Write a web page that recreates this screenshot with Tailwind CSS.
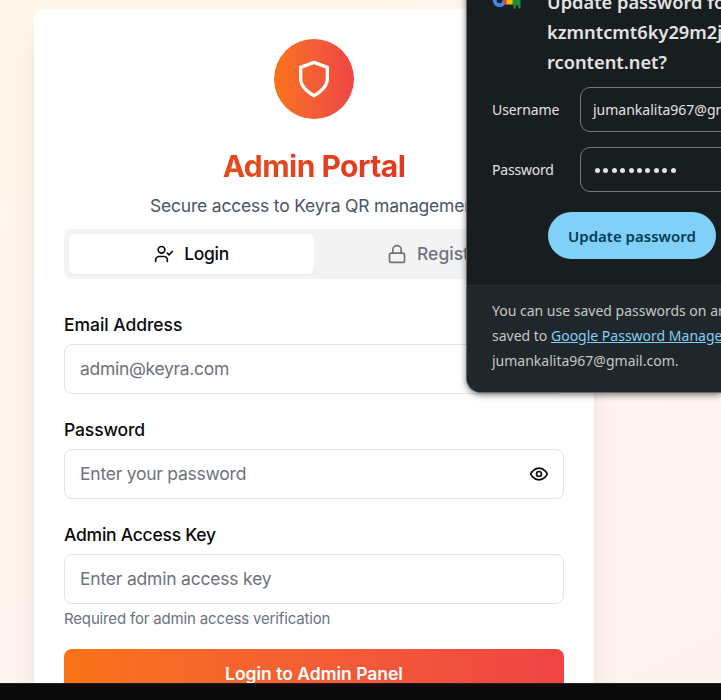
<!DOCTYPE html>
<html lang="en">
<head>
<meta charset="utf-8">
<title>Admin Portal</title>
<script src="https://cdn.jsdelivr.net/npm/@tailwindcss/browser@4"></script>
</head>
<body class="relative h-[700px] w-[721px] overflow-hidden bg-[#0a0a0a] font-['Inter',sans-serif]">
<main class="h-[683px] overflow-hidden bg-[linear-gradient(155deg,#fff6ea,#fef2f0)] pl-[34px] pt-[9px]">
  <section class="h-[760px] w-[560px] rounded-[10px] bg-white px-[30px] pt-[30px] shadow-[0_25px_31px_-6px_rgba(0,0,0,0.1),0_10px_12px_-7px_rgba(0,0,0,0.1)]">
    <header class="flex flex-col items-center">
      <div class="flex size-20 items-center justify-center rounded-full bg-gradient-to-r from-[#f97316] to-[#ef4444]">
        <svg class="size-10 text-white" viewBox="0 0 24 24" fill="none" stroke="currentColor" stroke-width="2" stroke-linecap="round" stroke-linejoin="round"><path d="M12 22s8-4 8-10V5l-8-3-8 3v7c0 6 8 10 8 10"/></svg>
      </div>
      <h1 class="mt-[28px] h-10 whitespace-nowrap bg-gradient-to-r from-[#ea580c] to-[#dc2626] bg-clip-text text-[30px] font-bold leading-[39px] tracking-[-0.53px] text-transparent [background-size:500px_100%] [background-position:center]">Admin Portal</h1>
      <p class="mt-[6px] h-[26px] self-start whitespace-nowrap pl-[86px] text-[17.5px] leading-[25px] tracking-[-0.2px] text-[#4b5563]">Secure access to Keyra QR management</p>
    </header>
    <nav class="mt-[10px] flex h-[50px] rounded-lg bg-[#f3f3f4] p-[5px] text-[17.5px] font-medium">
      <div class="flex w-[245px] items-center justify-center gap-[10px] rounded-md bg-white text-[#0a0a0a] shadow-[0_1px_2px_rgba(0,0,0,0.05)]">
        <svg class="size-5" viewBox="0 0 24 24" fill="none" stroke="currentColor" stroke-width="2" stroke-linecap="round" stroke-linejoin="round"><path d="M16 21v-2a4 4 0 0 0-4-4H6a4 4 0 0 0-4 4v2"/><circle cx="9" cy="7" r="4"/><path d="m16 11 2 2 4-4"/></svg>
        <span class="tracking-[-0.3px]">Login</span>
      </div>
      <div class="flex w-[245px] items-center gap-[10px] pl-[73px] text-[#71717a]">
        <svg class="size-5" viewBox="0 0 24 24" fill="none" stroke="currentColor" stroke-width="2" stroke-linecap="round" stroke-linejoin="round"><rect x="3" y="11" width="18" height="11" rx="2"/><path d="M7 11V7a5 5 0 0 1 10 0v4"/></svg>
        <span>Register</span>
      </div>
    </nav>
    <form>
      <label class="mt-[36px] block h-[20px] text-[17.5px] font-medium leading-[20px] tracking-[-0.05px] text-[#0a0a0a]">Email Address</label>
      <div class="mt-[9px] flex h-[50px] items-center rounded-lg border border-[#e4e4e7] pl-[15px] text-[17.5px] tracking-[-0.3px] text-[#71717a]"><span>admin@keyra.com</span></div>
      <label class="mt-[26px] block h-[20px] text-[17.5px] font-medium leading-[20px] tracking-[-0.12px] text-[#0a0a0a]">Password</label>
      <div class="mt-[9px] flex h-[50px] items-center justify-between rounded-lg border border-[#e4e4e7] pl-[15px] pr-[14px] text-[17.5px] tracking-[-0.24px] text-[#71717a]"><span>Enter your password</span>
        <svg class="size-5 text-[#0a0a0a]" viewBox="0 0 24 24" fill="none" stroke="currentColor" stroke-width="2" stroke-linecap="round" stroke-linejoin="round"><path d="M2 12s3-7 10-7 10 7 10 7-3 7-10 7-10-7-10-7Z"/><circle cx="12" cy="12" r="3"/></svg>
      </div>
      <label class="mt-[26px] block h-[20px] text-[17.5px] font-medium leading-[20px] tracking-[-0.25px] text-[#0a0a0a]">Admin Access Key</label>
      <div class="mt-[9px] flex h-[50px] items-center rounded-lg border border-[#e4e4e7] pl-[15px] text-[17.5px] tracking-[-0.2px] text-[#71717a]"><span>Enter admin access key</span></div>
      <p class="mt-[5px] h-5 text-[15px] leading-5 tracking-[-0.16px] text-[#6b7280]">Required for admin access verification</p>
      <div class="mt-[20px] flex h-[50px] items-center justify-center rounded-lg bg-gradient-to-r from-[#f97316] to-[#ef4444] text-[17.5px] font-semibold text-white"><span>Login to Admin Panel</span></div>
    </form>
  </section>
</main>
<div class="h-[17px] border-t border-[#202020] bg-[#0a0a0a]"></div>

<aside class="absolute left-[466px] top-[-20px] h-[413px] w-[255px] overflow-hidden rounded-l-[15px] border border-r-0 border-[#656a6b] bg-[#181d1f] font-['Noto_Sans','Open_Sans',sans-serif] text-[#e3e3e3] shadow-[0_2px_6px_rgba(0,0,0,0.5)]">
  <div class="flex h-[304px] flex-col pl-[25px] pt-[6px]">
    <div class="flex h-[91px] whitespace-nowrap">
      <svg class="mt-[7px] h-[16px] w-[55px] shrink-0" viewBox="0 0 55 16"><circle cx="7.5" cy="6.500" r="4.7" fill="none" stroke="#4285f4" stroke-width="3.8"/><path d="M10.500 3H15v7.500h-3z" fill="#ea4335"/><path d="M14.500 3H21v7.500h-6.500z" fill="#fbbc04"/><path d="M20.500 3H28.500v11.500h-2v-3h-3v3h-2v-4h-1z" fill="#1e8e3e"/></svg>
      <h2 class="text-[18.250px] font-semibold leading-[30px]"><span class="block">Update password for</span><span class="block">kzmntcmt6ky29m2j</span><span class="block">rcontent.net?</span></h2>
    </div>
    <div class="mt-[9px] flex h-[45px] items-center text-[14px]"><span class="w-[88px] shrink-0 tracking-[-0.1px]">Username</span><div class="flex h-[45px] w-[220px] shrink-0 items-center rounded-[10px] border border-[#74797a] pl-[12px]"><span>jumankalita967@gmail.com</span></div></div>
    <div class="mt-[15px] flex h-[45px] items-center text-[14px]"><span class="w-[88px] shrink-0 tracking-[-0.2px]">Password</span><div class="flex h-[45px] w-[220px] shrink-0 items-center gap-[3.4px] rounded-[10px] border border-[#74797a] pl-[14px] pt-[2px]">
      <i class="size-[5px] rounded-full bg-[#e3e3e3]"></i><i class="size-[5px] rounded-full bg-[#e3e3e3]"></i><i class="size-[5px] rounded-full bg-[#e3e3e3]"></i><i class="size-[5px] rounded-full bg-[#e3e3e3]"></i><i class="size-[5px] rounded-full bg-[#e3e3e3]"></i><i class="size-[5px] rounded-full bg-[#e3e3e3]"></i><i class="size-[5px] rounded-full bg-[#e3e3e3]"></i><i class="size-[5px] rounded-full bg-[#e3e3e3]"></i><i class="size-[5px] rounded-full bg-[#e3e3e3]"></i><i class="size-[5px] rounded-full bg-[#e3e3e3]"></i>
    </div></div>
    <div class="ml-[56px] mt-[20px] flex h-[47px] w-[168px] items-center justify-center rounded-full bg-[#80d0f7] pt-[2px] text-[15px] font-semibold text-[#063d52]"><span>Update password</span></div>
  </div>
  <footer class="h-[109px] whitespace-nowrap border-t border-[#2b3033] bg-[#20272a] pl-[25px] pt-[12px] text-[14px] leading-[25px] text-[#c4c7c5]">
    <p>You can use saved passwords on any device. They’re</p>
    <p>saved to <a class="text-[#80d0f7] underline">Google Password Manager</a> for</p>
    <p>jumankalita967@gmail.com.</p>
  </footer>
</aside>
</body>
</html>
